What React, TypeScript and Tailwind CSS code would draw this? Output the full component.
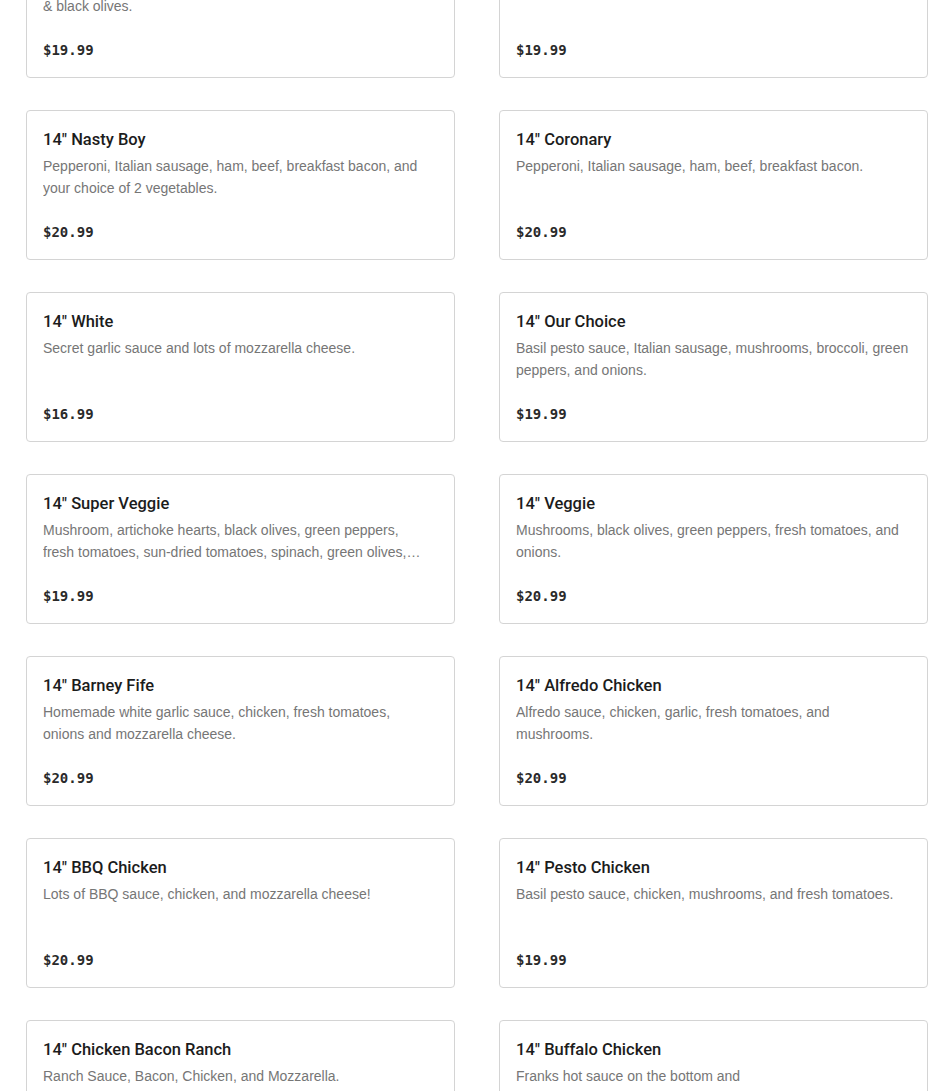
import React from "react";

type Item = { title: string; desc: React.ReactNode; price: string };

const items: Item[] = [
  {
    title: '14" Meat Lovers',
    desc: (
      <>
        Pepperoni, Italian sausage, ham, beef, mushrooms,
        <br />& black olives.
      </>
    ),
    price: "$19.99",
  },
  { title: '14" Hawaiian', desc: "Ham, pineapple, and mozzarella cheese.", price: "$19.99" },
  {
    title: '14" Nasty Boy',
    desc: "Pepperoni, Italian sausage, ham, beef, breakfast bacon, and your choice of 2 vegetables.",
    price: "$20.99",
  },
  { title: '14" Coronary', desc: "Pepperoni, Italian sausage, ham, beef, breakfast bacon.", price: "$20.99" },
  { title: '14" White', desc: "Secret garlic sauce and lots of mozzarella cheese.", price: "$16.99" },
  {
    title: '14" Our Choice',
    desc: "Basil pesto sauce, Italian sausage, mushrooms, broccoli, green peppers, and onions.",
    price: "$19.99",
  },
  {
    title: '14" Super Veggie',
    desc: (
      <>
        Mushroom, artichoke hearts, black olives, green peppers,
        <br />
        fresh tomatoes, sun-dried tomatoes, spinach, green olives, broccoli, and onions.
      </>
    ),
    price: "$19.99",
  },
  {
    title: '14" Veggie',
    desc: "Mushrooms, black olives, green peppers, fresh tomatoes, and onions.",
    price: "$20.99",
  },
  {
    title: '14" Barney Fife',
    desc: (
      <>
        Homemade white garlic sauce, chicken, fresh tomatoes,
        <br />
        onions and mozzarella cheese.
      </>
    ),
    price: "$20.99",
  },
  {
    title: '14" Alfredo Chicken',
    desc: (
      <>
        Alfredo sauce, chicken, garlic, fresh tomatoes, and
        <br />
        mushrooms.
      </>
    ),
    price: "$20.99",
  },
  { title: '14" BBQ Chicken', desc: "Lots of BBQ sauce, chicken, and mozzarella cheese!", price: "$20.99" },
  {
    title: '14" Pesto Chicken',
    desc: "Basil pesto sauce, chicken, mushrooms, and fresh tomatoes.",
    price: "$19.99",
  },
  { title: '14" Chicken Bacon Ranch', desc: "Ranch Sauce, Bacon, Chicken, and Mozzarella.", price: "$20.99" },
  {
    title: '14" Buffalo Chicken',
    desc: (
      <>
        Franks hot sauce on the bottom and
        <br />
        ranch on top with chicken and mozzarella.
      </>
    ),
    price: "$20.99",
  },
];

function Card({ item }: { item: Item }) {
  return (
    <div className="flex h-[150px] flex-col rounded-[4px] border border-[#d4d4d4] bg-white px-4 pt-4 pb-[17px]">
      <div
        className="text-[16.5px] leading-[24px] font-medium text-[#1c1c1c] pt-[1px]"
        style={{ fontFamily: 'Roboto, "Liberation Sans", sans-serif' }}
      >
        {item.title}
      </div>
      <div className="mt-[3px] h-[44px] overflow-hidden text-[14px] leading-[22px] text-[#767676] line-clamp-2">
        {item.desc}
      </div>
      <div
        className="mt-auto text-[14px] leading-[20px] font-bold text-[#2a2a2a]"
        style={{ fontFamily: '"DejaVu Sans Mono", monospace' }}
      >
        {item.price}
      </div>
    </div>
  );
}

export default function App() {
  return (
    <div
      className="h-[1091px] overflow-hidden bg-white"
      style={{ fontFamily: '"Liberation Sans", Arial, sans-serif' }}
    >
      <div className="mt-[-72px] grid grid-cols-2 gap-x-[44px] gap-y-[32px] pl-[26px] pr-[22px]">
        {items.map((it, i) => (
          <Card key={i} item={it} />
        ))}
      </div>
    </div>
  );
}
